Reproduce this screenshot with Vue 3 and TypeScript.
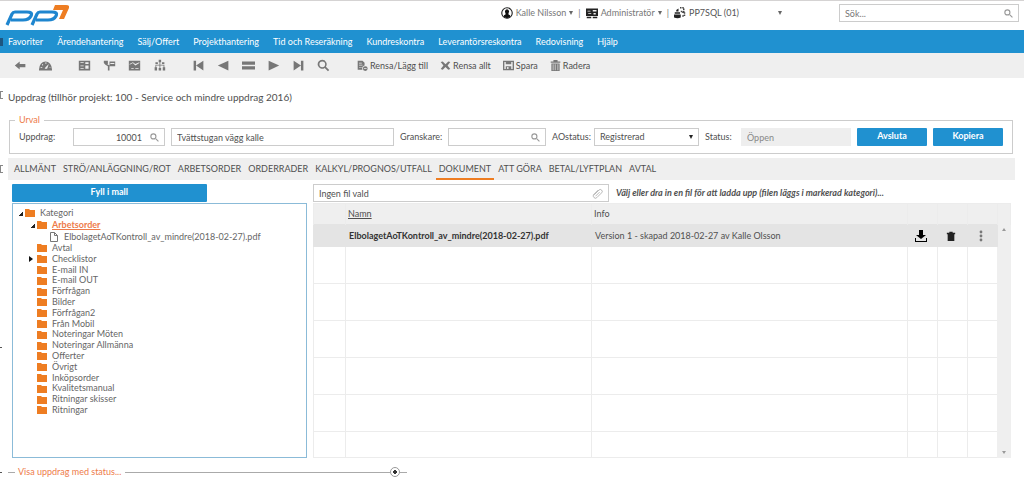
<script setup lang="ts">
import { ref } from 'vue'

interface ToolIcon {
  label: string
  d: string
}

interface TreeItem {
  name: string
  closed?: boolean
}

const menu: string[] = [
  'Favoriter', 'Ärendehantering', 'Sälj/Offert', 'Projekthantering', 'Tid och Reseräkning',
  'Kundreskontra', 'Leverantörsreskontra', 'Redovisning', 'Hjälp',
]

const toolGroups: ToolIcon[][] = [
  [
    { label: 'Tillbaka', d: 'M1 8 7 3v3h7v4H7v3z' },
    { label: 'Översikt', d: 'M0 13a8 10 0 0 1 16 0v1H0zM7 12h3l2-6-4 4zM2 10v1h2v-1zM4 6v2h1V6zM8 4v2h1V4zM13 10v1h1v-1z' },
  ],
  [
    { label: 'Planering', d: 'M1 2h14v12H1zM3 4v1h4V4zM9 4v2h4V4zM3 8v1h4V8zM9 8v4h4V8zM3 11v1h4v-1z' },
    { label: 'Flöde', d: 'M1 2h5v4H5l3 2v6H6V9L3 7 1 5zM8 3h7v6H8zM9 5v1h5V5z' },
    { label: 'Diagram', d: 'M1 2h14v12H1zM2 7l4-2 3 3 5-3V4L9 6 6 4 2 6zM4 11v1h3v-1zM9 11v1h4v-1z' },
    { label: 'Struktur', d: 'M7 1h3v3H9v3h5v3h1v4h-3v-4h1V8H9v3h1v3H7v-3h1V8H4v2h1v4H2v-4h1V7h5V4H7zM3 4h3v2H3zM11 4h3v2h-3z' },
  ],
  [
    { label: 'Första', d: 'M2 2h3v12H2zM14 2v12L5 8z' },
    { label: 'Föregående', d: 'M14 2v12L1 8z' },
    { label: 'Lista', d: 'M0 3h16v4H0zM0 9h16v4H0z' },
    { label: 'Nästa', d: 'M2 2v12l13-6z' },
    { label: 'Sista', d: 'M11 2h3v12h-3zM2 2v12l9-6z' },
    { label: 'Sök post', d: 'M6.500 1a5.500 5.500 0 1 0 3 10l4 4 1.500-1.500-4-4A5.500 5.500 0 0 0 6.500 1zM6.500 3a3.500 3.500 0 1 1 0 7 3.500 3.500 0 0 1 0-7z' },
  ],
]

const actions: ToolIcon[] = [
  { label: 'Rensa/Lägg till', d: 'M1 1h7l3 3v4a4 4 0 0 0-3 6H1zM3 4v1h4V4zM3 7v1h5V7zM3 10v1h4v-1zM12 9a3.500 3.500 0 1 1 0 7 3.500 3.500 0 0 1 0-7zM10 12v1h4v-1z' },
  { label: 'Rensa allt', d: 'M1 3l3-1 4 4 4-4 3 1-4 5 4 5-3 1-4-4-4 4-3-1 4-5z' },
  { label: 'Spara', d: 'M0 1h16v14H0zM2 3v10h2V9h8v4h2V3h-2v3H4V3zM6 10v3h2v-3z' },
  { label: 'Radera', d: 'M5 0h6v2h4v2H1V2h4zM2 5h12v11H2zM4 6v9h1V6zM7 6v9h1V6zM11 6v9h1V6z' },
]

const tabs: string[] = [
  'ALLMÄNT', 'STRÖ/ANLÄGGNING/ROT', 'ARBETSORDER', 'ORDERRADER', 'KALKYL/PROGNOS/UTFALL',
  'DOKUMENT', 'ATT GÖRA', 'BETAL/LYFTPLAN', 'AVTAL',
]
const activeTab = ref('DOKUMENT')

const folders: TreeItem[] = [
  { name: 'Avtal' }, { name: 'Checklistor', closed: true }, { name: 'E-mail IN' }, { name: 'E-mail OUT' },
  { name: 'Förfrågan' }, { name: 'Bilder' }, { name: 'Förfrågan2' }, { name: 'Från Mobil' },
  { name: 'Noteringar Möten' }, { name: 'Noteringar Allmänna' }, { name: 'Offerter' }, { name: 'Övrigt' },
  { name: 'Inköpsorder' }, { name: 'Kvalitetsmanual' }, { name: 'Ritningar skisser' }, { name: 'Ritningar' },
]

const documentName = 'ElbolagetAoTKontroll_av_mindre(2018-02-27).pdf'
const orderNumber = ref('10001')
const orderName = ref('Tvättstugan vägg kalle')
const reviewer = ref('')
const query = ref('')
const fileName = ref('Ingen fil vald')
</script>

<template>
  <div class="page">
    <header class="top">
      <a href="#" class="logo" aria-label="pp7">
        <svg viewBox="0 0 64 21" width="64" height="21">
          <g fill="none" stroke="#1f86cf" stroke-width="3.200">
            <path d="M2 20 7 9q1-2 3-2h12q6 0 4 4t-8 4H6" />
            <path d="M27 20 32 9q1-2 3-2h12q6 0 4 4t-8 4H31" />
          </g>
          <path d="M50 0h11q4 0 3 3l-5 11h-5l4-9H48z" fill="#ee7d22" />
        </svg>
      </a>
      <div class="session">
        <button type="button" class="who">
          <svg viewBox="0 0 16 16" width="12" height="12"><circle cx="8" cy="8" r="7" fill="#fff" stroke="#222" stroke-width="1.500" /><path d="M8 3a3 3 0 0 1 2 5v2l2 1v2l-4 2-4-2v-2l2-1V8a3 3 0 0 1 2-5z" fill="#111" /></svg>
          Kalle Nilsson<i class="caret"></i>
        </button>
        <span class="bar">|</span>
        <button type="button" class="who">
          <svg viewBox="0 0 16 16" width="12" height="12"><path d="M0 2h16v10H0zM1 13h6v2H1zM9 13h6v2H9z" fill="#222" /><path d="M2 5h4v1H2zM9 4h5v2H9zM3 8h4v1H3zM10 8h3v2h-3z" fill="#eee" /></svg>
          Administratör<i class="caret"></i>
        </button>
        <span class="bar">|</span>
        <label class="database">
          <svg viewBox="0 0 16 16" width="12" height="12"><path d="M1 7h7v2H1zM0 10h9v4q-4 2-9 0zM3 4l3-2v4H3z" fill="#222" /><path d="M8 1h5v5H9M11 7h3v5h-4" fill="none" stroke="#444" stroke-width="2" stroke-dasharray="2 1" /></svg>
          <select aria-label="Databas"><option>PP7SQL (01)</option></select>
          <i class="caret"></i>
        </label>
      </div>
      <div class="field search">
        <input v-model="query" type="search" placeholder="Sök..." aria-label="Sök">
        <svg class="lens" viewBox="0 0 16 16" width="9" height="9"><circle cx="6" cy="6" r="4.500" /><path d="m10 10 5 5" /></svg>
      </div>
    </header>

    <nav class="menu grip">
      <a v-for="item in menu" :key="item" href="#">{{ item }}</a>
    </nav>

    <div class="tools">
      <div v-for="(group, index) in toolGroups" :key="index" class="tool-group">
        <button v-for="tool in group" :key="tool.label" type="button" class="tool" :aria-label="tool.label">
          <svg viewBox="0 0 16 16" width="13" height="13"><path :d="tool.d" fill-rule="evenodd" /></svg>
        </button>
      </div>
      <div class="actions">
        <button v-for="action in actions" :key="action.label" type="button" class="action">
          <svg viewBox="0 0 16 16" width="11" height="11"><path :d="action.d" fill-rule="evenodd" /></svg>
          {{ action.label }}
        </button>
      </div>
    </div>

    <main>
      <h1 class="grip">Uppdrag (tillhör projekt: 100 - Service och mindre uppdrag 2016)</h1>

      <fieldset class="selection">
        <legend>Urval</legend>
        <div class="row">
          <label for="order">Uppdrag:</label>
          <div class="field">
            <input id="order" v-model="orderNumber" class="number" type="text">
            <svg class="lens" viewBox="0 0 16 16" width="9" height="9"><circle cx="6" cy="6" r="4.500" /><path d="m10 10 5 5" /></svg>
          </div>
          <div class="field"><input v-model="orderName" type="text" aria-label="Benämning"></div>
          <label for="reviewer">Granskare:</label>
          <div class="field">
            <input id="reviewer" v-model="reviewer" type="text">
            <svg class="lens" viewBox="0 0 16 16" width="9" height="9"><circle cx="6" cy="6" r="4.500" /><path d="m10 10 5 5" /></svg>
          </div>
          <label for="ao">AOstatus:</label>
          <div class="field">
            <select id="ao"><option>Registrerad</option></select>
            <i class="caret dark"></i>
          </div>
          <label for="status">Status:</label>
          <div class="field locked"><input id="status" type="text" value="Öppen" disabled></div>
          <button type="button" class="primary">Avsluta</button>
          <button type="button" class="primary">Kopiera</button>
        </div>
      </fieldset>

      <div class="tabs grip" role="tablist">
        <button v-for="tab in tabs" :key="tab" type="button" role="tab" :aria-selected="tab === activeTab" :class="{ active: tab === activeTab }" @click="activeTab = tab">{{ tab }}</button>
      </div>

      <div class="workspace">
        <section class="categories">
          <button type="button" class="primary template">Fyll i mall</button>
          <div class="tree">
            <div class="node root">
              <i class="twist open"></i>
              <svg class="folder" viewBox="0 0 10 8" width="10" height="8"><path d="M0 0h4l1 1h5v7H0z" /></svg>
              <span>Kategori</span>
            </div>
            <ul>
              <li>
                <div class="node branch">
                  <i class="twist open"></i>
                  <svg class="folder" viewBox="0 0 10 8" width="10" height="8"><path d="M0 0h4l1 1h5v7H0z" /></svg>
                  <a href="#" class="current">Arbetsorder</a>
                </div>
                <div class="node leaf">
                  <svg viewBox="0 0 8 10" width="8" height="10"><path d="M.5.500h4l3 3v6h-7zM4.500.500v3h3" fill="#fff" stroke="#777" /></svg>
                  <span>{{ documentName }}</span>
                </div>
              </li>
              <li v-for="folder in folders" :key="folder.name" class="node">
                <i class="twist" :class="{ closed: folder.closed }"></i>
                <svg class="folder" viewBox="0 0 10 8" width="10" height="8"><path d="M0 0h4l1 1h5v7H0z" /></svg>
                <span>{{ folder.name }}</span>
              </li>
            </ul>
          </div>
        </section>

        <section class="documents">
          <div class="upload">
            <div class="field file">
              <input v-model="fileName" type="text" aria-label="Fil" readonly>
              <svg class="clip" viewBox="0 0 16 16" width="11" height="11"><path d="m3 10 7-7q2-2 4 0t0 4l-7 7q-2 2-4 0t-1-4l7-7M5 12l6-6" /></svg>
            </div>
            <p>Välj eller dra in en fil för att ladda upp (filen läggs i markerad kategori)...</p>
          </div>
          <div class="sheet">
            <table>
              <colgroup><col class="c-mark"><col class="c-name"><col class="c-info"><col class="c-icon"><col class="c-icon"><col class="c-icon"><col class="c-scroll"></colgroup>
              <thead>
                <tr><th></th><th><a href="#">Namn</a></th><th>Info</th><th></th><th></th><th></th><th></th></tr>
              </thead>
              <tbody>
                <tr class="picked">
                  <td></td>
                  <td><b>{{ documentName }}</b></td>
                  <td>Version 1 - skapad 2018-02-27 av Kalle Olsson</td>
                  <td><button type="button" aria-label="Ladda ner"><svg viewBox="0 0 12 12" width="12" height="12"><path d="M4 0h4v5h3L6 9 1 5h3zM0 8h1v3h10V8h1v4H0z" /></svg></button></td>
                  <td><button type="button" aria-label="Ta bort"><svg viewBox="0 0 12 12" width="10" height="10"><path d="M4 1h4v1h3v2H1V2h3zM2 4h8v8H2z" fill="#222" /></svg></button></td>
                  <td><button type="button" aria-label="Mer"><svg class="dots" viewBox="0 0 4 12" width="4" height="12"><circle cx="2" cy="2" r="1.400" /><circle cx="2" cy="6" r="1.400" /><circle cx="2" cy="10" r="1.400" /></svg></button></td>
                  <td class="track" rowspan="7"><div class="arrows"><i class="up"></i><i class="down"></i></div></td>
                </tr>
                <tr v-for="n in 6" :key="n" class="blank"><td></td><td></td><td></td><td></td><td></td><td></td></tr>
              </tbody>
            </table>
          </div>
        </section>
      </div>

      <div class="status-line">
        <i class="stub"></i>
        <span>Visa uppdrag med status...</span>
        <i class="rule"></i>
        <button type="button" aria-label="Visa"></button>
        <i class="stub"></i>
      </div>
    </main>
  </div>
</template>

<style>
body {
  margin: 0;
  background: #fff;
}
</style>

<style scoped>
.page {
  position: relative;
  font-family: Lato, "Liberation Sans", sans-serif;
  font-size: 9px;
  line-height: 12px;
  color: #505050;
  border-top: 1px solid #d5d3d3;
}
.page *,
.page *::before {
  box-sizing: border-box;
}
button,
input,
select {
  margin: 0;
  padding: 0;
  border: 0;
  background: none;
  font: inherit;
  color: inherit;
  appearance: none;
}
button {
  cursor: pointer;
}
svg {
  display: block;
  flex: none;
}
.grip::before {
  content: "";
  position: absolute;
  left: 0;
  width: 3px;
  height: 8px;
  border: 1px solid #888;
  border-left: 0;
  border-right: 0;
  background: linear-gradient(90deg, #888 1px, transparent 1px);
}
.top {
  display: flex;
  align-items: flex-start;
  height: 29px;
  padding: 3px 5px 0;
}
.logo {
  padding-top: 1px;
}
.session {
  display: flex;
  align-items: center;
  height: 18px;
  margin-left: auto;
  color: #777;
}
.who,
.database {
  display: flex;
  align-items: center;
  gap: 3px;
}
.database {
  color: #555;
  width: 108px;
}
.database select {
  flex: 1;
}
.bar {
  padding: 0 5px;
}
.caret {
  border: 2px solid transparent;
  border-top: 4px solid #666;
  border-bottom: 0;
}
.field {
  display: flex;
  align-items: center;
  height: 18px;
  min-width: 0;
  padding: 0 5px;
  border: 1px solid #ccc;
  background: #fff;
}
.field input,
.field select {
  flex: 1;
  width: 0;
  min-width: 0;
  height: 100%;
  outline: 0;
}
.field input::placeholder {
  color: #777;
  opacity: 1;
}
.search {
  width: 180px;
  margin-left: 57px;
}
.lens {
  fill: none;
  stroke: #999;
  stroke-width: 2;
}
.field .number {
  text-align: right;
  padding-right: 8px;
}
.caret.dark {
  border-top-color: #222;
}
.locked {
  border-color: #eee;
  background: #eee;
  color: #888;
}
.menu {
  display: flex;
  align-items: center;
  gap: 14px;
  height: 23px;
  padding: 0 8px;
  background: #2091d0;
}
.menu.grip::before {
  border: 0;
  background: #1d5680;
}
.menu a {
  color: #fff;
  text-decoration: none;
}
.tools {
  display: flex;
  align-items: center;
  gap: 14px;
  height: 25px;
  padding: 0 8px;
  background: #efefef;
}
.tool-group,
.actions {
  display: flex;
}
.actions {
  gap: 12px;
  padding-left: 7px;
}
.tool {
  display: flex;
  justify-content: center;
  width: 25px;
}
.tool svg,
.action svg {
  fill: #777;
}
.action {
  display: flex;
  align-items: center;
  gap: 2px;
}
main {
  padding: 0 9px 0 8px;
}
h1 {
  margin: 0;
  padding: 13px 0 11px;
  font-size: 10px;
  line-height: 12px;
  font-weight: 400;
}
.selection {
  margin: 0 2px 4px 1px;
  padding: 2px 9px 7px;
  border: 1px solid #ccc;
}
legend {
  margin-left: -4px;
  padding: 0 4px;
  color: #ee7b4a;
}
.row {
  display: grid;
  grid-template-columns: 48px 92fr 223fr 42px 98fr 36px 105fr 30px 110fr 70px 70px;
  align-items: center;
  gap: 6px;
}
.primary {
  height: 18px;
  padding-bottom: 2px;
  border-radius: 1px;
  background: #2091d0;
  color: #fff;
  font-weight: 700;
}
.tabs {
  display: flex;
  align-items: center;
  gap: 1px;
  height: 22px;
  padding-left: 3px;
  background: #efefef;
}
.tabs button {
  height: 100%;
  padding: 2px 3px 0;
  border-bottom: 2px solid transparent;
}
.tabs .active {
  border-color: #ee7d22;
}
.workspace {
  display: grid;
  grid-template-columns: 295fr 698fr;
  gap: 6px;
  padding: 4px 4px 0;
}
.categories {
  display: flex;
  flex-direction: column;
}
.template {
  width: 66%;
}
.tree {
  flex: 1;
  margin-top: 1px;
  padding: 3px 4px;
  border: 1px solid #8bbbd8;
  color: #666;
}
.tree ul {
  margin: 0;
  padding: 0 0 0 12px;
  list-style: none;
}
.node {
  display: flex;
  align-items: center;
  gap: 2px;
  line-height: 1.2;
}
.node span,
.node a {
  margin-left: 3px;
}
.root,
.branch,
.leaf {
  line-height: 12px;
}
.leaf {
  padding-left: 21px;
}
.leaf span {
  margin-left: 4px;
}
.folder {
  fill: #ee7d22;
}
.twist {
  width: 6px;
  height: 6px;
  flex: none;
}
.twist.open {
  background: linear-gradient(135deg, transparent 60%, #222 60%);
}
.twist.closed {
  border: 3px solid transparent;
  border-left: 4px solid #111;
  border-right: 0;
}
.current {
  color: #ee7b4a;
  font-weight: 700;
}
.upload {
  display: flex;
  align-items: center;
  gap: 7px;
}
.upload p {
  margin: 0;
  font-style: italic;
  font-weight: 700;
}
.file {
  width: 296px;
}
.clip {
  fill: none;
  stroke: #999;
}
.sheet {
  margin-top: 1px;
}
table {
  width: 100%;
  table-layout: fixed;
  border-collapse: collapse;
  border: 1px solid #ececec;
}
.c-mark { width: 32px; }
.c-name { width: 246px; }
.c-icon { width: 30px; }
.c-scroll { width: 13px; }
th,
td {
  height: 22px;
  padding: 0 3px;
  border: 1px solid #ececec;
  font-weight: 400;
  text-align: left;
  white-space: nowrap;
}
th {
  height: 21px;
  padding: 0 2px;
  background: #efefef;
  border-bottom: 0;
}
th:last-child {
  border-left: 0;
}
th a {
  color: inherit;
}
.picked td {
  background: #e4e4e4;
  border-color: #e4e4e4;
}
.picked b {
  color: #333;
}
.picked button {
  display: flex;
  justify-content: center;
  width: 100%;
  padding-right: 3px;
}
.picked .dots {
  fill: #777;
}
.blank td {
  height: 37px;
}
.blank:last-child td {
  height: 26px;
}
.picked .track {
  height: 1px;
  padding: 3px 0;
  background: #efefef;
  border-color: #efefef;
}
.arrows {
  display: flex;
  flex-direction: column;
  justify-content: space-between;
  align-items: center;
  height: 100%;
}
.up,
.down {
  border: 2px solid transparent;
}
.up {
  border-top: 0;
  border-bottom: 3px solid #999;
}
.down {
  border-bottom: 0;
  border-top: 3px solid #999;
}
.status-line {
  display: flex;
  align-items: center;
  width: 399px;
  padding-top: 8px;
  color: #ee7b4a;
}
.status-line span {
  padding: 0 4px 0 3px;
}
.stub {
  width: 7px;
  border-top: 1px solid #aaa;
}
.rule {
  flex: 1;
  border-top: 1px solid #aaa;
}
.status-line button {
  width: 10px;
  height: 10px;
  border: 1px solid #999;
  border-radius: 50%;
  background: radial-gradient(#333 0 2px, #fff 2px);
}
.tree::before,
.status-line::before {
  content: "";
  position: absolute;
  left: 0;
  width: 2px;
  border-top: 1px solid #555;
}
.tree::before {
  margin-top: 140px;
}
</style>
